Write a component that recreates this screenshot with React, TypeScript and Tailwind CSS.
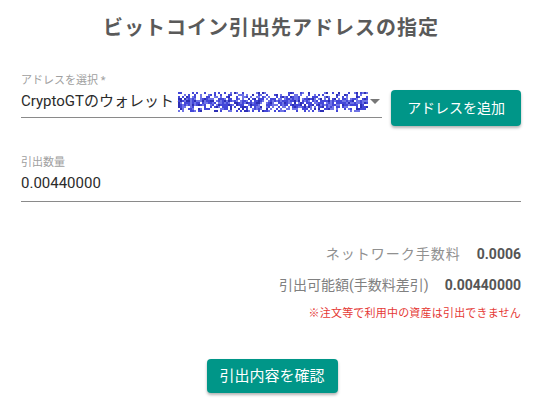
import React from 'react';

const font = { fontFamily: "Roboto, 'Noto Sans CJK JP', sans-serif" };

// pixel noise used to mask the wallet address
const Redaction = () => {
  const cells: { x: number; y: number; c: string }[] = [];
  let seed = 11;
  const rand = () => {
    seed = (seed * 16807) % 2147483647;
    return seed / 2147483647;
  };
  for (let y = 0; y < 20; y += 2) {
    const mid = 1 - Math.abs(y - 9) / 10;
    for (let x = 0; x < 190; x += 2) {
      const r = rand();
      if (r < 0.3 + mid * 0.6) {
        const shade = rand();
        const c = shade < 0.45 ? '#4347d8' : shade < 0.8 ? '#6f74e6' : '#2d2fb5';
        cells.push({ x, y, c });
      }
    }
  }
  return (
    <svg width="190" height="20" viewBox="0 0 190 20" className="shrink-0">
      {cells.map((p, i) => (
        <rect key={i} x={p.x} y={p.y} width="2" height="2" fill={p.c} />
      ))}
    </svg>
  );
};

const App = () => {
  return (
    <div className="w-[559px] h-[415px] bg-white overflow-hidden" style={font}>
      <div className="w-[500px] ml-[21px] flex flex-col">
        {/* Title */}
        <h1 className="pt-[14px] h-[42px] text-center text-[20px] leading-[28px] font-bold tracking-[1px] text-[#5a5a5a]">
          ビットコイン引出先アドレスの指定
        </h1>

        {/* Address select + add button */}
        <div className="mt-[32px] flex items-end gap-[9px]">
          <div className="w-[362px] flex flex-col border-b border-[#8a8a8a]">
            <span className="text-[11px] leading-[13px] text-[#a0a0a0]">アドレスを選択 *</span>
            <div className="mt-[4px] h-[26px] flex items-start">
              <span className="text-[15px] leading-[20px] text-[#2b2b2b] whitespace-nowrap">CryptoGTのウォレット -</span>
              <span className="ml-[-4px] mt-[1px]"><Redaction /></span>
              <svg width="10" height="5" viewBox="0 0 10 5" className="ml-auto mr-[2px] mt-[8px]">
                <path d="M0 0h10L5 5z" fill="#777" />
              </svg>
            </div>
          </div>
          <button className="mb-[-8px] w-[130px] h-[36px] rounded-[4px] bg-[#009688] text-white text-[14px] shadow-[0_2px_3px_rgba(0,0,0,0.3)]">
            アドレスを追加
          </button>
        </div>

        {/* Withdraw amount */}
        <div className="mt-[38px] flex flex-col border-b border-[#8a8a8a]">
          <span className="text-[11px] leading-[13px] text-[#a0a0a0]">引出数量</span>
          <span className="mt-[4px] h-[28px] text-[15px] leading-[20px] text-[#2b2b2b]">0.00440000</span>
        </div>

        {/* Fees */}
        <div className="mt-[42px] flex flex-col items-end">
          <div className="flex items-center gap-[16px] h-[20px]">
            <span className="text-[14px] tracking-[1px] text-[#909090]">ネットワーク手数料</span>
            <span className="text-[14px] font-bold text-[#555]">0.0006</span>
          </div>
          <div className="mt-[11px] flex items-center gap-[16px] h-[20px]">
            <span className="text-[14px] text-[#808080]">引出可能額(手数料差引)</span>
            <span className="text-[14px] font-bold text-[#555]">0.00440000</span>
          </div>
          <span className="mt-[12px] text-[11px] leading-[14px] tracking-[0.2px] text-[#e53935]">※注文等で利用中の資産は引出できません</span>
        </div>

        {/* Confirm */}
        <div className="mt-[38px] flex justify-center">
          <button className="ml-[2px] w-[131px] h-[34px] rounded-[4px] bg-[#009688] text-white text-[15px] shadow-[0_2px_3px_rgba(0,0,0,0.3)]">
            引出内容を確認
          </button>
        </div>
      </div>
    </div>
  );
};

export default App;
